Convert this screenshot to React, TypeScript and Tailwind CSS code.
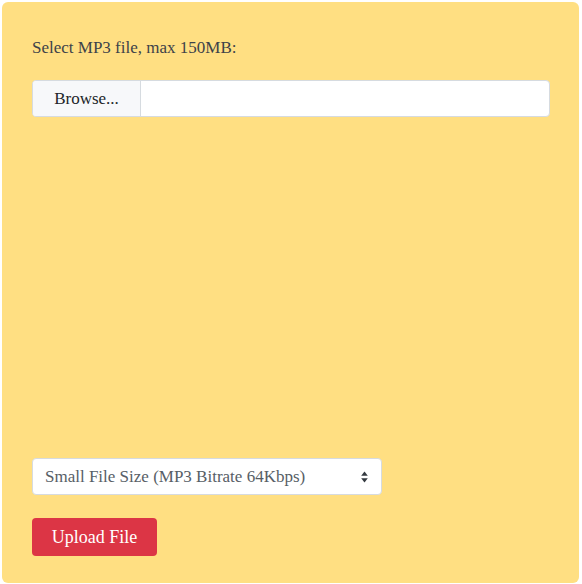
export default function App() {
  return (
    <div className="min-h-screen bg-white pt-[2px] pl-[2px] font-['Liberation_Serif',serif]">
      <div className="w-[577px] h-[581px] rounded-md bg-[#ffdf82] px-[30px] pt-[34px]">
        <label className="block text-[17px] leading-6 text-[#3d4249]">
          Select MP3 file, max 150MB:
        </label>

        <div className="mt-[20px] flex h-[37px] w-[518px] overflow-hidden rounded border border-[#d6dbe0] bg-white">
          <div className="flex w-[108px] items-center justify-center border-r border-[#d6dbe0] bg-[#f7f8fa] text-[17px] text-[#212529]">
            Browse...
          </div>
          <div className="flex-1" />
        </div>

        <div className="h-[341px]" />

        <div className="flex h-[37px] w-[350px] items-center justify-between rounded border border-[#d6dbe0] bg-white pl-[12px] pr-[13px]">
          <span className="text-[17px] text-[#575e66]">
            Small File Size (MP3 Bitrate 64Kbps)
          </span>
          <svg width="7" height="12" viewBox="0 0 7 12" className="text-[#343a40]">
            <path d="M3.5 0.5 L6.8 4.8 H0.2 Z" fill="currentColor" />
            <path d="M3.5 11.5 L6.8 7.2 H0.2 Z" fill="currentColor" />
          </svg>
        </div>

        <button className="mt-[23px] flex h-[38px] w-[125px] items-center justify-center rounded bg-[#dc3545] text-[18px] text-white">
          Upload File
        </button>
      </div>
    </div>
  );
}
